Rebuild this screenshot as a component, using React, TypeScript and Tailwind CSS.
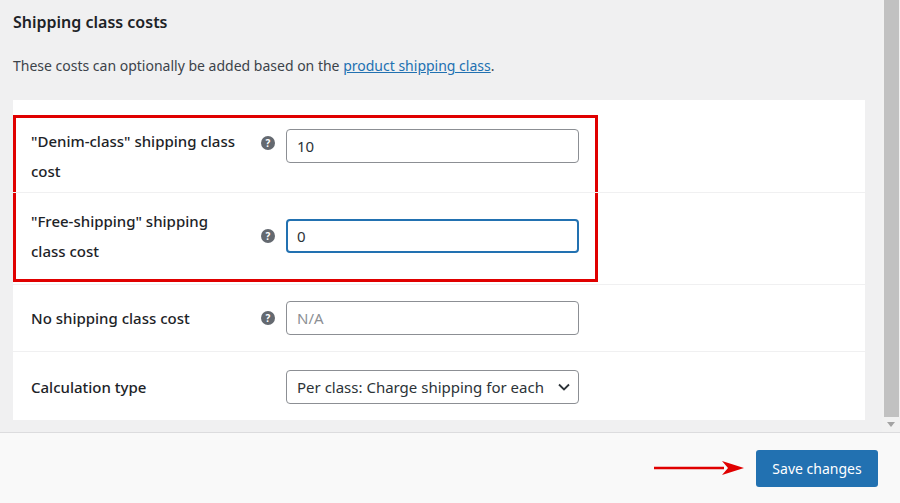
import React from 'react'

function Help() {
    return (
        <span className="w-[14px] h-[14px] rounded-full bg-[#646970] text-white text-[10px] font-bold flex items-center justify-center leading-none">?</span>
    )
}

function Row({ label, children, h, border = true, top = false }: { label: React.ReactNode, children: React.ReactNode, h: string, border?: boolean, top?: boolean }) {
    return (
        <div className={`flex ${top ? 'items-start pt-[8px]' : 'items-center'} ${h} ${border ? 'border-b border-[#f0f0f1]' : ''}`}>
            <div className="w-[237px] pl-[18px] text-[15px] leading-[30px] font-medium text-[#1d2327]">{label}</div>
            <div className={`w-[36px] flex justify-center ${top ? 'pt-[10px]' : ''}`}><Help /></div>
            {children}
        </div>
    )
}

export default function App() {
    return (
        <div className="w-[900px] h-[503px] flex flex-col bg-[#f0f0f1] font-['Open_Sans',sans-serif] overflow-hidden">
            <div className="flex h-[432px]">
                <div className="flex-1 pl-[13px] pr-[17px]">
                    <h2 className="text-[16px] font-semibold text-[#1d2327] pt-[10px] leading-[24px]">Shipping class costs</h2>
                    <p className="text-[14px] text-[#3c434a] mt-[22px] leading-[20px]">
                        These costs can optionally be added based on the <a className="text-[#2271b1] underline">product shipping class</a>.
                    </p>
                    <div className="mt-[24px] bg-white h-[320px] pt-[15px]">
                        <div className="relative w-[585px] border-[3px] border-[#e00000] -mb-[3px]">
                            <div className="-ml-[3px] w-[852px]">
                                <Row h="h-[75px]" top label={<>"Denim-class" shipping class<br />cost</>}>
                                    <input readOnly value="10" className="mt-[3px] w-[293px] h-[34px] border border-[#8c8f94] rounded-[4px] px-[10px] text-[15px] text-[#2c3338]" />
                                </Row>
                                <Row h="h-[86px]" border={false} label={<>"Free-shipping" shipping<br />class cost</>}>
                                    <input readOnly value="0" className="w-[293px] h-[34px] border-2 border-[#2271b1] rounded-[4px] px-[9px] text-[15px] text-[#2c3338] outline-none" />
                                </Row>
                            </div>
                        </div>
                        <div className="border-t border-[#f0f0f1] mt-[5px]">
                            <Row h="h-[67px]" label="No shipping class cost">
                                <input readOnly placeholder="N/A" className="w-[293px] h-[34px] border border-[#8c8f94] rounded-[4px] px-[10px] text-[15px] placeholder-[#8c8f94]" />
                            </Row>
                            <div className="flex items-center h-[70px]">
                                <div className="w-[273px] pl-[18px] text-[15px] font-medium text-[#1d2327]">Calculation type</div>
                                <div className="w-[293px] h-[34px] border border-[#8c8f94] rounded-[4px] pl-[10px] pr-[8px] flex items-center justify-between text-[15px] text-[#2c3338]">
                                    <span className="whitespace-nowrap overflow-hidden">Per class: Charge shipping for each</span>
                                    <svg width="12" height="8" viewBox="0 0 12 8" className="shrink-0 ml-1"><path d="M1 1.5l5 5 5-5" fill="none" stroke="#2c3338" strokeWidth="1.8" /></svg>
                                </div>
                            </div>
                        </div>
                    </div>
                </div>
                <div className="w-[18px] bg-[#f1f1f1] flex flex-col items-center">
                    <div className="w-[15px] flex-1 bg-[#c1c1c1]" />
                    <div className="h-[15px] flex items-center justify-center"><svg width="8" height="5"><path d="M0 0h8L4 5z" fill="#a3a3a3" /></svg></div>
                </div>
            </div>
            <div className="flex-1 bg-[#f9f9f9] border-t border-[#dcdcde] flex items-center justify-end pr-[22px] gap-[12px]">
                <svg width="90" height="16" viewBox="0 0 90 16"><path d="M0 8h70" stroke="#e00000" strokeWidth="2.5" /><path d="M68 1l22 7-22 7 6-7z" fill="#e00000" /></svg>
                <button className="w-[122px] h-[37px] bg-[#2271b1] text-white text-[14px] rounded-[3px]">Save changes</button>
            </div>
        </div>
    )
}
